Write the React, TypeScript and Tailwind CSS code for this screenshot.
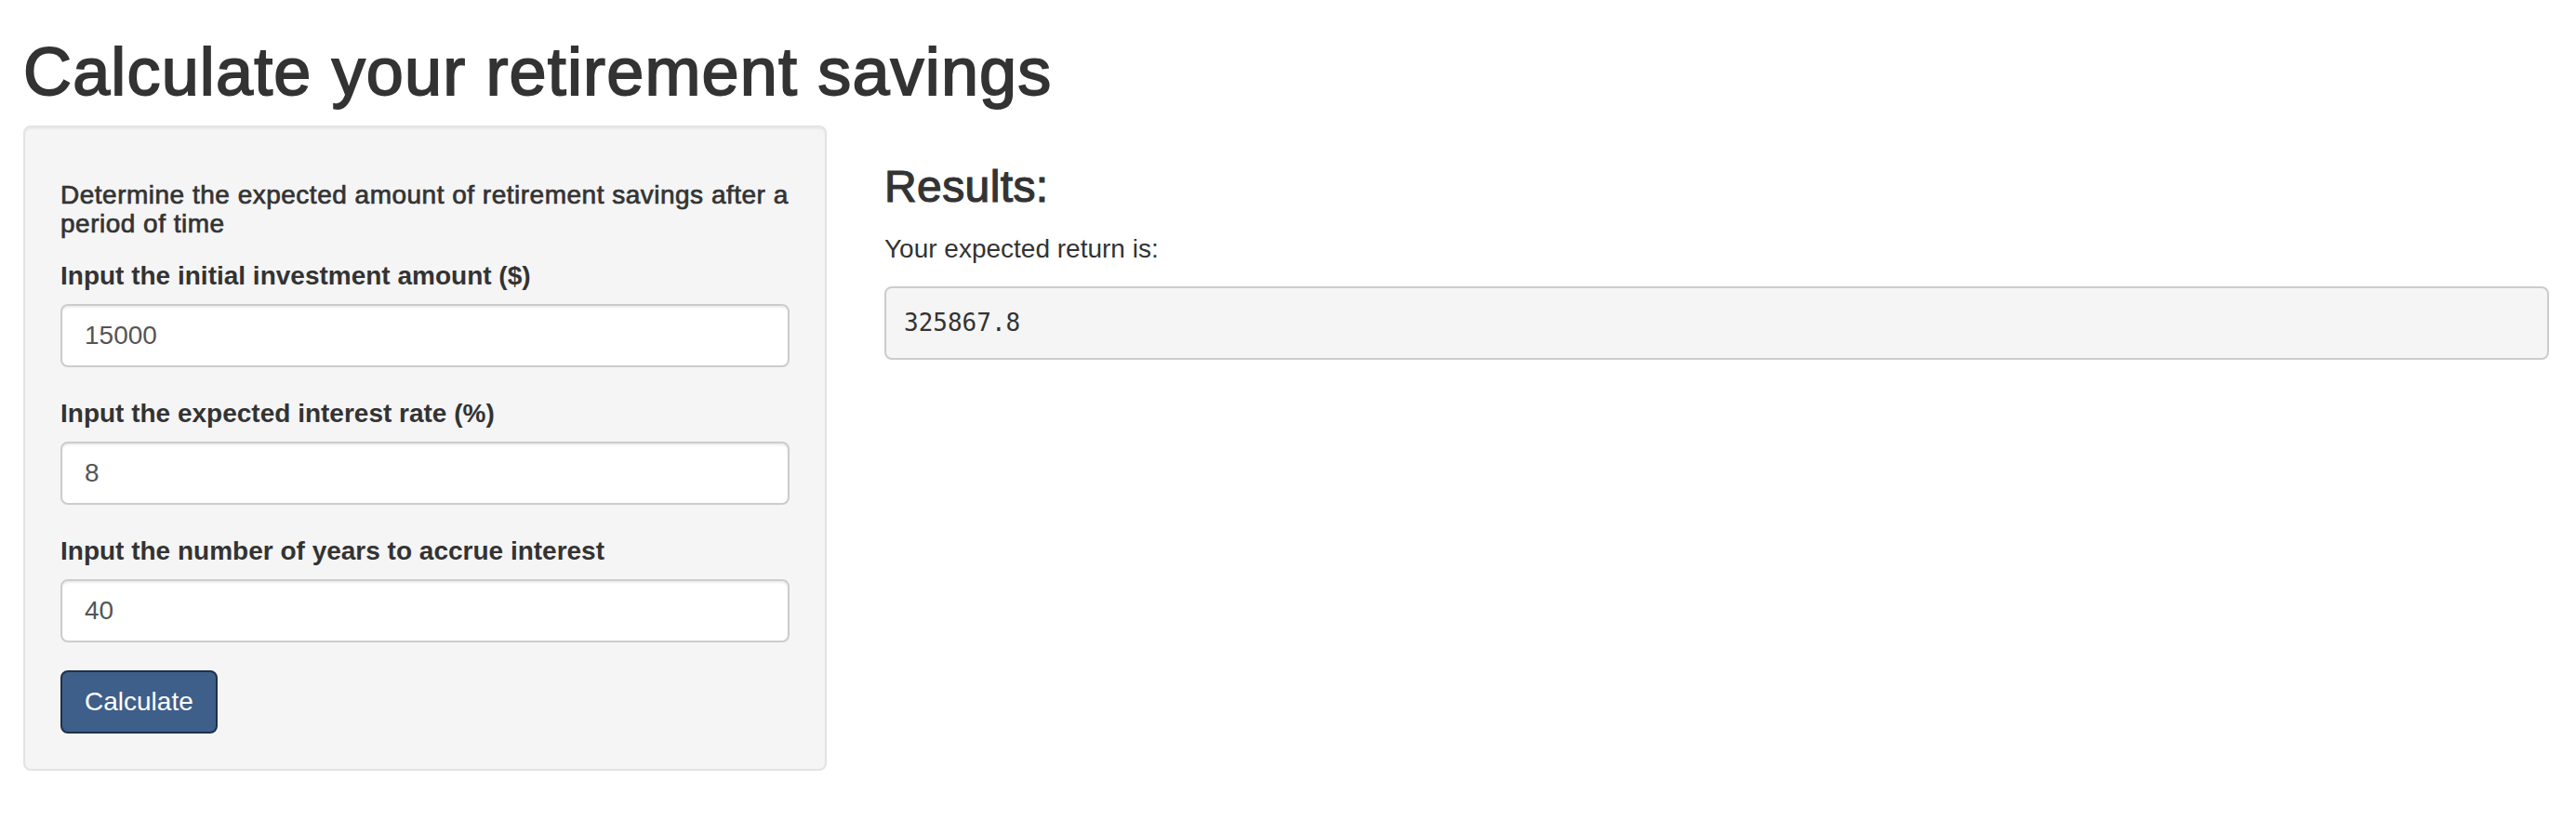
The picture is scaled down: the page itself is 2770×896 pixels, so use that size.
const inputs = [
  { label: 'Input the initial investment amount ($)', value: '15000' },
  { label: 'Input the expected interest rate (%)', value: '8' },
  { label: 'Input the number of years to accrue interest', value: '40' },
];

function NumberField({ label, value }: { label: string; value: string }) {
  return (
    <div className="mb-[30px] flex flex-col">
      <label className="mb-[10px] text-[28px] leading-[40px] font-bold text-[#333]">
        {label}
      </label>
      <input
        type="number"
        defaultValue={value}
        className="h-[68px] w-full rounded-[8px] border-2 border-[#ccc] bg-white px-[24px] py-[12px] text-[28px] leading-[40px] text-[#555] shadow-[inset_0_2px_2px_rgba(0,0,0,0.075)] outline-none [appearance:textfield]"
      />
    </div>
  );
}

export default function App() {
  return (
    <div
      className="min-h-[896px] w-full bg-white pr-[29px] pl-[25px] text-[#333]"
      style={{ fontFamily: '"Liberation Sans", Arial, sans-serif' }}
    >
      {/* headings are Helvetica Neue Medium in the original; a thin stroke stands in for weight 500 */}
      <h1 className="mt-[38px] mb-[18px] text-[72px] leading-[79px] font-normal tracking-[1.15px] text-[#333] [-webkit-text-stroke:1.8px_#333]">
        Calculate your retirement savings
      </h1>
      <div className="flex items-start gap-[62px]">
        <form
          className="w-[864px] shrink-0 rounded-[8px] border-2 border-[#e3e3e3] bg-[#f5f5f5] p-[38px] shadow-[inset_0_2px_2px_rgba(0,0,0,0.05)]"
          onSubmit={(e) => e.preventDefault()}
        >
          <h5 className="mt-[20px] mb-[20px] text-[28px] leading-[30.8px] font-normal tracking-[0.5px] [-webkit-text-stroke:0.7px_#333]">
            Determine the expected amount of retirement savings after a period of time
          </h5>
          {inputs.map((f) => (
            <NumberField key={f.label} label={f.label} value={f.value} />
          ))}
          <button
            type="submit"
            className="h-[68px] rounded-[8px] border-2 border-[#1f3148] bg-[#3e5f8a] px-[24px] text-[28px] leading-[40px] text-white"
          >
            Calculate
          </button>
        </form>
        <div className="min-w-0 flex-1">
          <h3 className="mt-[40px] mb-[20px] text-[48px] leading-[52.8px] font-normal tracking-[0.4px] [-webkit-text-stroke:1.2px_#333]">
            Results:
          </h3>
          <p className="mb-[20px] text-[28px] leading-[40px]">Your expected return is:</p>
          <pre
            className="mb-[20px] rounded-[8px] border-2 border-[#ccc] bg-[#f5f5f5] p-[19px] text-[26px] leading-[37px] text-[#333]"
            style={{ fontFamily: '"DejaVu Sans Mono", "Liberation Mono", monospace' }}
          >
            325867.8
          </pre>
        </div>
      </div>
    </div>
  );
}
